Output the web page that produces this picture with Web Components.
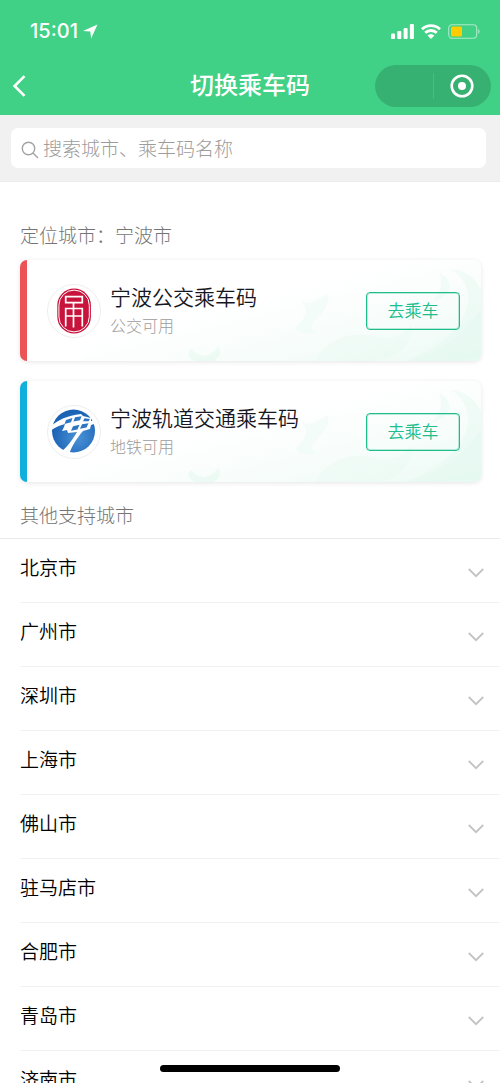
<!DOCTYPE html>
<html lang="zh-CN">
<head>
  <meta charset="UTF-8">
  <meta name="viewport" content="width=device-width, initial-scale=1.0">
  <title>切换乘车码</title>
  <style>
    body {
      margin: 0;
      background: #fff;
      font-family: Inter, "Noto Sans CJK SC", sans-serif;
    }
  </style>
</head>
<body>
  <ride-app></ride-app>

  <script>
    class StatusBar extends HTMLElement {
      constructor() {
        super();
        this.attachShadow({ mode: "open" });
      }

      connectedCallback() {
        const time = this.getAttribute("time") || "00:00";

        this.shadowRoot.innerHTML = `
          <style>
            :host {
              display: flex;
              align-items: center;
              justify-content: space-between;
              height: 56px;
              padding: 6px 19px 0 30px;
              box-sizing: border-box;
              color: #fff;
            }
            .time, .signals {
              display: flex;
              align-items: center;
            }
            .time {
              gap: 5px;
              font-size: 20px;
              line-height: 24px;
              font-weight: 500;
            }
            .signals {
              gap: 7px;
            }
            svg {
              display: block;
            }
          </style>
          <div class="time">
            <span>${time}</span>
            <svg width="15" height="15" viewBox="0 0 15 15" fill="#fff" aria-hidden="true">
              <path d="M14.5.5 0 7l7.3.6.8 7z"/>
            </svg>
          </div>
          <div class="signals">
            <svg width="23" height="15" viewBox="0 0 23 15" fill="#fff" aria-hidden="true">
              <rect x="0" y="9.5" width="4" height="5.5" rx="1"/>
              <rect x="6.3" y="7" width="4" height="8" rx="1"/>
              <rect x="12.6" y="4" width="4" height="11" rx="1"/>
              <rect x="18.9" y="0" width="4" height="15" rx="1"/>
            </svg>
            <svg width="20" height="15" viewBox="0 0 20 15" aria-hidden="true">
              <g fill="none" stroke="#fff" stroke-width="2.8">
                <path d="M1 5.3a13 13 0 0 1 18 0"/>
                <path d="M4.2 8.8a8.4 8.4 0 0 1 11.6 0"/>
              </g>
              <path d="M10 15 6.6 11.6a5 5 0 0 1 6.8 0z" fill="#fff"/>
            </svg>
            <svg width="33" height="15" viewBox="0 0 33 15" aria-hidden="true">
              <rect x=".7" y=".7" width="28" height="13.6" rx="3.5" fill="none" stroke="#fff" stroke-opacity=".55" stroke-width="1.1"/>
              <rect x="3" y="2.6" width="11" height="9.8" rx="1.5" fill="#fc0"/>
              <path d="M30.3 5v5c1.6-.8 1.6-4.2 0-5z" fill="#fff" fill-opacity=".6"/>
            </svg>
          </div>
        `;
      }
    }

    class NavBar extends HTMLElement {
      constructor() {
        super();
        this.attachShadow({ mode: "open" });
      }

      connectedCallback() {
        this.shadowRoot.innerHTML = `
          <style>
            :host {
              display: grid;
              grid-template-columns: 1fr auto 1fr;
              align-items: center;
              height: 59px;
              padding: 0 9px;
              box-sizing: border-box;
              color: #fff;
            }
            h1 {
              margin: 0;
              font-size: 24px;
              line-height: 32px;
              font-weight: 500;
            }
            button {
              display: flex;
              align-items: center;
              justify-content: center;
              padding: 0;
              border: none;
              background: none;
              cursor: pointer;
            }
            .back {
              justify-self: start;
              padding: 0 3px;
            }
            .capsule {
              justify-self: end;
              display: grid;
              grid-template-columns: 1fr 1fr;
              width: 116px;
              height: 42px;
              border-radius: 21px;
              background: #37b171;
            }
            .capsule button + button {
              justify-content: flex-start;
            }
            .capsule button + button::before {
              content: "";
              width: 1px;
              height: 26px;
              margin-right: 16px;
              background: #4bbb80;
            }
            svg {
              display: block;
            }
          </style>
          <button class="back" type="button" aria-label="返回">
            <svg width="15" height="22" viewBox="0 0 15 22" fill="none" stroke="#fff" stroke-width="2.6">
              <path d="M12.5 1.2 2.6 11l9.9 9.8"/>
            </svg>
          </button>
          <h1><slot></slot></h1>
          <div class="capsule">
            <button type="button" aria-label="更多"></button>
            <button type="button" aria-label="关闭">
              <svg width="24" height="24" viewBox="0 0 24 24">
                <circle cx="12" cy="12" r="10.3" fill="none" stroke="#fff" stroke-width="2.6"/>
                <circle cx="12" cy="12" r="4" fill="#fff"/>
              </svg>
            </button>
          </div>
        `;
      }
    }

    class SearchBar extends HTMLElement {
      constructor() {
        super();
        this.attachShadow({ mode: "open" });
      }

      connectedCallback() {
        const placeholder = this.getAttribute("placeholder") || "";

        this.shadowRoot.innerHTML = `
          <style>
            :host {
              display: block;
              padding: 13px 14px 13px 11px;
              background: #f1f1f1;
              border-bottom: 1px solid #ebebeb;
            }
            label {
              display: flex;
              align-items: center;
              gap: 4px;
              height: 40px;
              padding: 3px 10px 0;
              box-sizing: border-box;
              border-radius: 7px;
              background: #fff;
            }
            svg {
              flex: none;
            }
            input {
              flex: 1;
              min-width: 0;
              padding: 0;
              border: none;
              outline: none;
              background: none;
              color: #333;
              font-family: inherit;
              font-size: 19px;
              line-height: 28px;
              font-weight: 300;
            }
            input::placeholder {
              color: #9c9c9c;
            }
          </style>
          <label>
            <svg width="18" height="18" viewBox="0 0 18 18" fill="none" stroke="#a3a3a3" stroke-width="1.4" aria-hidden="true">
              <circle cx="7.500" cy="7.5" r="6.2"/>
              <path d="m12 12 5 5"/>
            </svg>
            <input type="search" placeholder="${placeholder}" aria-label="${placeholder}">
          </label>
        `;
      }
    }

    class RideCard extends HTMLElement {
      constructor() {
        super();
        this.attachShadow({ mode: "open" });
      }

      connectedCallback() {
        const name = this.getAttribute("name") || "";
        const note = this.getAttribute("note") || "";
        const accent = this.getAttribute("accent") || "#ccc";

        this.shadowRoot.innerHTML = `
          <style>
            :host {
              display: flex;
              align-items: center;
              position: relative;
              height: 101px;
              padding: 0 21px 0 20px;
              box-sizing: border-box;
              overflow: hidden;
              border-radius: 7px;
              background: #fff;
              border-left: 7px solid ${accent};
              box-shadow: 0 1px 5px rgba(0, 0, 0, 0.1);
            }
            .art {
              position: absolute;
              right: 0;
              bottom: 0;
              width: 400px;
              height: 100%;
            }
            .logo, .text, a {
              position: relative;
            }
            .logo {
              flex: none;
              width: 54px;
              height: 54px;
              border: 1px solid #eee;
              box-sizing: border-box;
              border-radius: 50%;
              background: #fff;
            }
            .text {
              flex: 1;
              min-width: 0;
              padding: 0 0 2px 9px;
            }
            h3, p {
              margin: 0;
              white-space: nowrap;
            }
            h3 {
              color: #16161e;
              font-size: 21px;
              line-height: 32px;
              font-weight: 350;
            }
            p {
              color: #9c9c9c;
              font-size: 16px;
              line-height: 24px;
              font-weight: 300;
            }
            a {
              flex: none;
              width: 94px;
              height: 38px;
              box-sizing: border-box;
              border: 1px solid #20bd8c;
              border-radius: 4px;
              box-shadow: inset 0 0 0 1px rgba(32, 189, 140, 0.3);
              color: #20bd8c;
              font-size: 17px;
              line-height: 36px;
              font-weight: 350;
              text-align: center;
              text-decoration: none;
            }
          </style>
          <svg class="art" viewBox="0 0 400 101" preserveAspectRatio="none" aria-hidden="true">
            <defs>
              <linearGradient id="fade" x1="0" y1="0" x2="1" y2="1">
                <stop offset=".4" stop-color="#f1fbf8" stop-opacity="0"/>
                <stop offset="1" stop-color="#ebfaf4"/>
              </linearGradient>
            </defs>
            <rect width="400" height="101" fill="url(#fade)"/>
            <g fill="#e4f8f0">
              <path d="M325 101c38-16 60-36 62-60 1-15-7-26-17-32 16 2 25 10 30 22v68z" opacity=".45"/>
              <path d="M328 101c32-8 56-28 72-52v52z" opacity=".6"/>
              <path d="M234 101c15-25 38-30 62-24 15 4 27-1 34-13 5 18-14 37-39 37z" opacity=".3"/>
              <path d="M219 38c8 10 16 3 27-4 5 7-3 18-12 26-4 6-5 10 2 12-11 3-20 1-21-5 13-12 12-18 4-29z" opacity=".35"/>
              <path d="M358 12c15 9 15 23-6 29 8-11 11-18 6-29z" opacity=".4"/>
              <path d="M110 89c8 9 18 10 27-2 5 7 0 11-4 14h-19c-7-3-8-8-4-12z" opacity=".6"/>
            </g>
          </svg>
          <div class="logo"><slot></slot></div>
          <div class="text">
            <h3>${name}</h3>
            <p>${note}</p>
          </div>
          <a href="#ride">去乘车</a>
        `;
      }
    }

    // Emblem of the city bus operator
    class BusLogo extends HTMLElement {
      constructor() {
        super();
        this.attachShadow({ mode: "open" });
      }

      connectedCallback() {
        this.shadowRoot.innerHTML = `
          <style>
            :host { display: block; }
            svg { display: block; }
          </style>
          <svg width="52" height="52" viewBox="0 0 52 52" aria-hidden="true">
            <rect x="9.3" y="3.5" width="33.6" height="45" rx="16.8" fill="#c8143c"/>
            <rect x="10.900" y="5.1" width="30.4" height="41.8" rx="15.2" fill="none" stroke="#fff" stroke-width="1"/>
            <g fill="none" stroke="#fff" stroke-width="1.700">
              <path d="M25.500 42.500V17.700H17.700V11.700H34.300V17.700H25.500"/>
              <path d="M17.700 41.500V23.500H34.300V41.500"/>
              <path d="M17.700 31H34.300"/>
            </g>
          </svg>
        `;
      }
    }

    // Emblem of the metro operator: a rail bridge over a blue disc
    class MetroLogo extends HTMLElement {
      constructor() {
        super();
        this.attachShadow({ mode: "open" });
      }

      connectedCallback() {
        this.shadowRoot.innerHTML = `
          <style>
            :host { display: block; }
            svg { display: block; }
          </style>
          <svg width="52" height="52" viewBox="0 0 52 52" aria-hidden="true">
            <defs>
              <radialGradient id="disc" cx=".6" cy=".65" r=".6">
                <stop offset="0" stop-color="#4a92d6"/>
                <stop offset="1" stop-color="#1b63b5"/>
              </radialGradient>
              <clipPath id="round"><circle cx="25.5" cy="25" r="22"/></clipPath>
            </defs>
            <circle cx="25.5" cy="25" r="21.5" fill="url(#disc)"/>
            <g clip-path="url(#round)" fill="#fff">
              <path d="M2 21C10 14 18 10 33 8l2 2 8 2v3h3v3l-3 1-1 4-7 2C29 32 25 38 21.500 47L13 46c8-7 12-13 16-20l-9 1-1-3-5 1 2-4 1-3C12 19 8 21 2 25z"/>
            </g>
            <g fill="#2f76c2">
              <path d="m18 14 6.500-2-1.500 4.300-6.500 1.700z"/>
              <path d="m27 11.300 6.500-1-1.500 4-6.500 1.200z"/>
              <path d="m25 20.300 6.500-1.500-2 4.700-6.500 1.200z"/>
              <path d="m34 18.300 6.500-1-2 4.200-6.500 1.300z"/>
              <path d="m36.500 12.200 5.500.8-1.500 2.300-5.500-.1z"/>
            </g>
          </svg>
        `;
      }
    }

    class CityRow extends HTMLElement {
      constructor() {
        super();
        this.attachShadow({ mode: "open" });
      }

      connectedCallback() {
        this.shadowRoot.innerHTML = `
          <style>
            :host {
              display: block;
              margin-left: 20px;
              border-bottom: 1px solid #f1f1f1;
            }
            button {
              display: flex;
              align-items: flex-start;
              justify-content: space-between;
              width: 100%;
              height: 63px;
              padding: 16px 16px 0 0;
              border: none;
              background: none;
              color: #000;
              font-family: inherit;
              font-size: 19px;
              line-height: 28px;
              font-weight: 350;
              text-align: left;
              cursor: pointer;
            }
            svg {
              margin-top: 13px;
            }
          </style>
          <button type="button" aria-expanded="false">
            <slot></slot>
            <svg width="16" height="10" viewBox="0 0 16 10" fill="none" stroke="#c3c3c3" stroke-width="1.8" aria-hidden="true">
              <path d="m.8 1 7.2 7.2L15.2 1"/>
            </svg>
          </button>
        `;

        const button = this.shadowRoot.querySelector("button");
        button.addEventListener("click", () => {
          const open = button.getAttribute("aria-expanded") === "true";
          button.setAttribute("aria-expanded", String(!open));
        });
      }
    }

    class RideApp extends HTMLElement {
      constructor() {
        super();
        this.attachShadow({ mode: "open" });
      }

      connectedCallback() {
        const cities = ["北京市", "广州市", "深圳市", "上海市", "佛山市", "驻马店市", "合肥市", "青岛市", "济南市"];

        this.shadowRoot.innerHTML = `
          <style>
            :host {
              display: block;
              height: 100vh;
              overflow: hidden;
            }
            header {
              background: #41d186;
            }
            .located {
              display: flex;
              flex-direction: column;
              gap: 20px;
              padding: 0 19px 0 20px;
            }
            h2 {
              margin: 0;
              color: #757575;
              font-size: 19px;
              line-height: 28px;
              font-weight: 300;
            }
            .located h2 {
              margin: 41px 0 -11px;
            }
            .others h2 {
              padding: 21px 20px 7px;
              border-bottom: 1px solid #ebebeb;
            }
            .home {
              position: fixed;
              bottom: 11px;
              left: 50%;
              width: 36%;
              height: 7px;
              border-radius: 4px;
              background: #000;
              transform: translateX(-50%);
            }
          </style>
          <header>
            <status-bar time="15:01"></status-bar>
            <nav-bar>切换乘车码</nav-bar>
          </header>
          <search-bar placeholder="搜索城市、乘车码名称"></search-bar>
          <main>
            <section class="located">
              <h2>定位城市：宁波市</h2>
              <ride-card name="宁波公交乘车码" note="公交可用" accent="#ec5355"><bus-logo></bus-logo></ride-card>
              <ride-card name="宁波轨道交通乘车码" note="地铁可用" accent="#11b0dc"><metro-logo></metro-logo></ride-card>
            </section>
            <section class="others">
              <h2>其他支持城市</h2>
              ${cities.map((city) => `<city-row>${city}</city-row>`).join("")}
            </section>
          </main>
          <div class="home"></div>
        `;
      }
    }

    customElements.define("status-bar", StatusBar);
    customElements.define("nav-bar", NavBar);
    customElements.define("search-bar", SearchBar);
    customElements.define("bus-logo", BusLogo);
    customElements.define("metro-logo", MetroLogo);
    customElements.define("ride-card", RideCard);
    customElements.define("city-row", CityRow);
    customElements.define("ride-app", RideApp);
  </script>
</body>
</html>
